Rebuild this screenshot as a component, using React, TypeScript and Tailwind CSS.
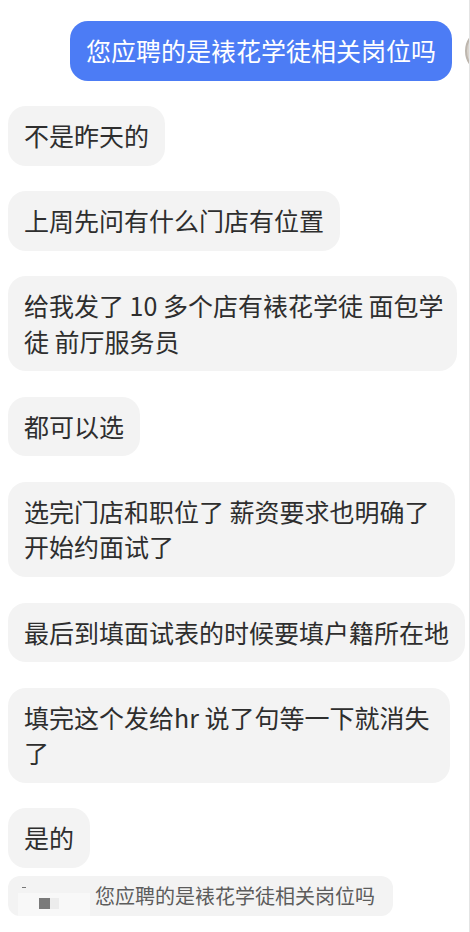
export default function App() {
  const font = "font-['Noto_Sans_CJK_SC','Noto_Sans',sans-serif]"

  return (
    <div className={`flex min-h-[932px] w-[470px] bg-white ${font}`}>
      {/* Chat column */}
      <div className="w-[469px] overflow-hidden pt-[21px] pb-4">
        {/* Outgoing message */}
        <div className="flex items-center pl-[70px]">
          <div className="shrink-0 rounded-[18px] bg-[#4c7cf5] px-4 py-3 text-[25px] leading-[35.5px] whitespace-nowrap text-white">
            您应聘的是裱花学徒相关岗位吗
          </div>
          <div className="ml-[13px] h-[48px] w-[48px] shrink-0 rounded-full border-2 border-[#bdb6ae] bg-[#d9d3cc]" />
        </div>

        {/* Incoming messages */}
        <div className="mt-[25.6px] flex flex-col items-start gap-[25.6px] pl-2">
          <Bubble>不是昨天的</Bubble>
          <Bubble>上周先问有什么门店有位置</Bubble>
          <Bubble width="w-[449px]">
            <span className="whitespace-nowrap">给我发了 10 多个店有裱花学徒 面包学</span>
            <br />
            徒 前厅服务员
          </Bubble>
          <Bubble>都可以选</Bubble>
          <Bubble width="w-[447px]">
            <span className="whitespace-nowrap">选完门店和职位了 薪资要求也明确了</span>
            <br />
            开始约面试了
          </Bubble>
          <Bubble>最后到填面试表的时候要填户籍所在地</Bubble>
          <Bubble width="w-[442px]">
            <span className="whitespace-nowrap">填完这个发给hr 说了句等一下就消失</span>
            <br />
            了
          </Bubble>
          <Bubble>是的</Bubble>
        </div>

        {/* Quoted message */}
        <div className="mt-2 ml-2 flex h-[40px] w-[385px] items-center rounded-xl bg-[#f3f3f3]">
          <div className="relative h-full w-[87px] shrink-0">
            <div className="absolute top-[17px] left-[10px] h-[23px] w-[72px] bg-[#f8f8f8]" />
            <div className="absolute top-[11px] left-[14px] h-[1.5px] w-[4px] bg-[#777]" />
            <div className="absolute top-[22px] left-[31px] h-[11px] w-[11px] bg-[#7a7a7a]" />
            <div className="absolute top-[22px] left-[42px] h-[11px] w-[9px] bg-[#ececec]" />
          </div>
          <span className="text-[20px] leading-[28px] whitespace-nowrap text-[#5c5c5c]">
            您应聘的是裱花学徒相关岗位吗
          </span>
        </div>
      </div>

      {/* Right edge divider */}
      <div className="w-px bg-[#e4e4e4]" />
    </div>
  )
}

function Bubble({
  children,
  width = 'w-fit',
}: {
  children: React.ReactNode
  width?: string
}) {
  return (
    <div
      className={`${width} rounded-[18px] bg-[#f3f3f3] px-4 py-3 text-[25px] leading-[35.5px] whitespace-nowrap text-[#2e2e2e]`}
    >
      {children}
    </div>
  )
}
